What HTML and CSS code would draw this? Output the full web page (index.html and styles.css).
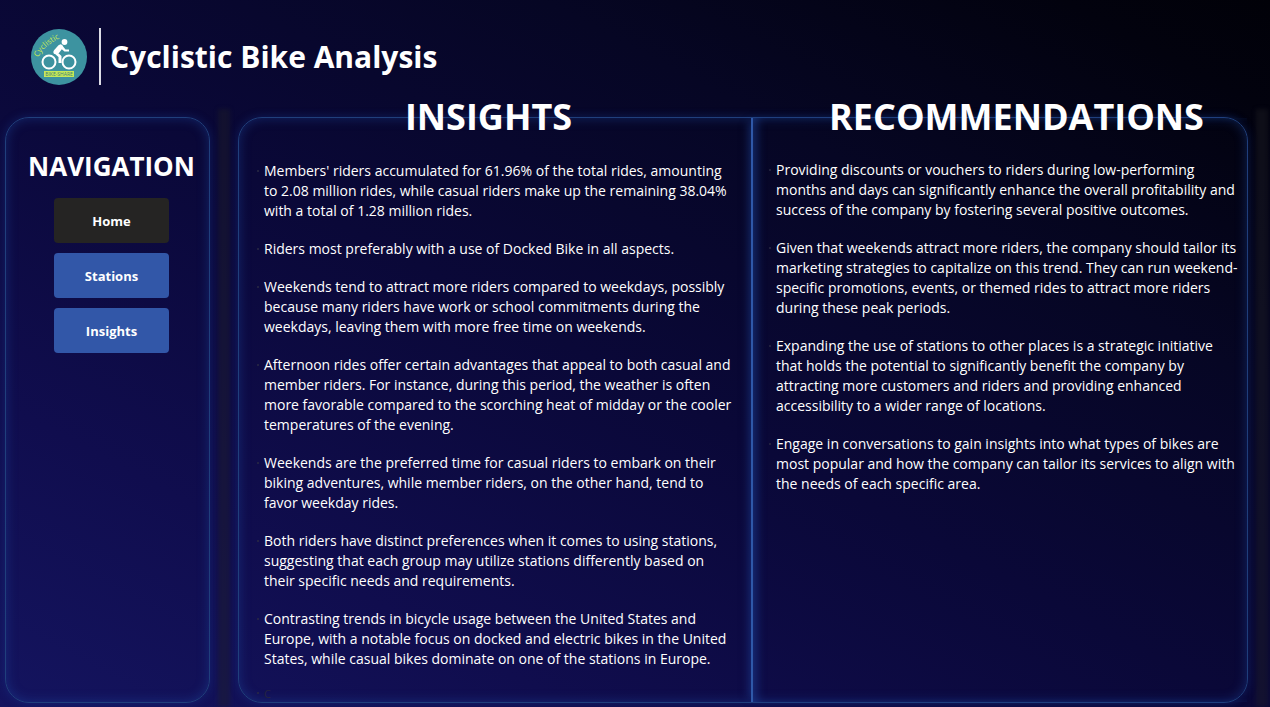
FILE: index.html
```html
<!DOCTYPE html>
<html lang="en">
<head>
<meta charset="utf-8">
<title>Cyclistic Bike Analysis</title>
<meta name="viewport" content="width=device-width, initial-scale=1">
<link rel="stylesheet" href="styles.css">
</head>
<body class="page">
<header class="header">
  <svg class="logo" viewBox="0 0 56 56" role="img" aria-label="Cyclistic Bike Share">
    <circle cx="28" cy="28" r="28" fill="#3d93a0"/>
    <path id="arc" d="M7 28.500Q14 15 34 7" fill="none"/>
    <text class="logo-name"><textPath href="#arc">Cyclistic</textPath></text>
    <g fill="none" stroke="#fff" stroke-width="2">
      <circle cx="18" cy="33" r="6.500"/>
      <circle cx="38" cy="33" r="6.500"/>
    </g>
    <circle cx="33.500" cy="13" r="2.900" fill="#fff"/>
    <path d="M30 17L24.500 23.500L29 27.500V34" fill="none" stroke="#fff" stroke-width="3" stroke-linejoin="round"/>
    <path d="M29.500 15.300Q31.500 15.500 32.500 18L34.500 20.500H38V22.500H33.500L30.800 20.200L28 24L23 25Q21.500 23 23 21.200L27.500 16.200Z" fill="#fff"/>
    <rect x="13" y="42" width="30" height="6" fill="#c6e858"/>
    <text class="logo-tag" x="28" y="47" text-anchor="middle">BIKE-SHARE</text>
  </svg>
  <h1 class="title">Cyclistic Bike Analysis</h1>
</header>
<main class="layout">
  <nav class="frame nav" aria-labelledby="nav-title">
    <h2 class="nav-title" id="nav-title">NAVIGATION</h2>
    <button class="nav-button nav-button-current" type="button">Home</button>
    <button class="nav-button" type="button">Stations</button>
    <button class="nav-button" type="button">Insights</button>
  </nav>
  <div class="strip"></div>
  <div class="frame board">
    <section class="column insights">
      <h2 class="column-title">INSIGHTS</h2>
      <ul class="points">
        <li>Members' riders accumulated for 61.96% of the total rides, amounting<br>to 2.08 million rides, while casual riders make up the remaining 38.04%<br>with a total of 1.28 million rides.</li>
        <li>Riders most preferably with a use of Docked Bike in all aspects.</li>
        <li>Weekends tend to attract more riders compared to weekdays, possibly<br>because many riders have work or school commitments during the<br>weekdays, leaving them with more free time on weekends.</li>
        <li>Afternoon rides offer certain advantages that appeal to both casual and<br>member riders. For instance, during this period, the weather is often<br>more favorable compared to the scorching heat of midday or the cooler<br>temperatures of the evening.</li>
        <li>Weekends are the preferred time for casual riders to embark on their<br>biking adventures, while member riders, on the other hand, tend to<br>favor weekday rides.</li>
        <li>Both riders have distinct preferences when it comes to using stations,<br>suggesting that each group may utilize stations differently based on<br>their specific needs and requirements.</li>
        <li>Contrasting trends in bicycle usage between the United States and<br>Europe, with a notable focus on docked and electric bikes in the United<br>States, while casual bikes dominate on one of the stations in Europe.</li>
        <li class="point-dim">C</li>
      </ul>
    </section>
    <section class="column recommendations">
      <h2 class="column-title">RECOMMENDATIONS</h2>
      <ul class="points">
        <li>Providing discounts or vouchers to riders during low-performing<br>months and days can significantly enhance the overall profitability and<br>success of the company by fostering several positive outcomes.</li>
        <li>Given that weekends attract more riders, the company should tailor its<br>marketing strategies to capitalize on this trend. They can run weekend-<br>specific promotions, events, or themed rides to attract more riders<br>during these peak periods.</li>
        <li>Expanding the use of stations to other places is a strategic initiative<br>that holds the potential to significantly benefit the company by<br>attracting more customers and riders and providing enhanced<br>accessibility to a wider range of locations.</li>
        <li>Engage in conversations to gain insights into what types of bikes are<br>most popular and how the company can tailor its services to align with<br>the needs of each specific area.</li>
      </ul>
    </section>
  </div>
  <div class="strip strip-end"></div>
</main>
</body>
</html>
```
FILE: styles.css
```css
* {
  box-sizing: border-box;
}

.page {
  margin: 0;
  min-height: 100vh;
  display: flex;
  flex-direction: column;
  color: #fff;
  font-family: "Segoe UI", "Open Sans", sans-serif;
  background: linear-gradient(28deg, #14145f 0%, #100d4e 22%, #0a0838 48%, #060624 72%, #02020e 92%, #010108 100%);
}

.header {
  display: flex;
  align-items: center;
  gap: 12px;
  padding: 28px 31px 22px;
}

.logo {
  width: 56px;
  height: 56px;
  flex: none;
}

.logo-name {
  font: 8px "Open Sans", sans-serif;
  fill: #c6e858;
}

.logo-tag {
  font: 5px "Open Sans", sans-serif;
  fill: #3d7f78;
}

.title {
  margin: 0;
  padding-left: 9px;
  border-left: 2px solid #dcdce6;
  font-size: 30px;
  font-weight: 700;
  line-height: 57px;
}

.layout {
  flex: 1;
  display: flex;
  padding: 10px 2px 4px 5px;
}

.frame {
  border: 1px solid #203f7c;
  border-radius: 24px;
  box-shadow: 0 0 10px rgba(24, 60, 150, 0.4), inset 0 0 12px rgba(32, 76, 165, 0.45);
}

.nav {
  flex: none;
  width: 205px;
  display: flex;
  flex-direction: column;
  align-items: center;
  gap: 10px;
  padding: 30px 12px 0 20px;
}

.nav-title {
  margin: 0 0 4px;
  font-size: 26px;
  font-weight: 700;
  line-height: 36px;
}

.nav-button {
  width: 115px;
  height: 45px;
  padding: 0;
  border: 0;
  border-radius: 4px;
  background: #3257a8;
  color: #fff;
  font: 700 13px/20px "Segoe UI", "Open Sans", sans-serif;
}

.nav-button-current {
  background: #252423;
}

.strip {
  flex: none;
  width: 12px;
  margin: -8px 8px -4px;
  background: rgba(32, 32, 38, 0.4);
  filter: blur(2px);
}

.strip-end {
  margin-right: 0;
}

.board {
  flex: 1;
  display: grid;
  grid-template-columns: 512fr 496fr;
}

.column {
  min-width: 0;
}

.insights {
  padding-left: 25px;
}

.recommendations {
  padding-left: 23px;
  border-left: 2px solid #2f58a8;
  box-shadow: -6px 0 8px -4px rgba(32, 76, 165, 0.5), inset 8px 0 10px -4px rgba(32, 76, 165, 0.5);
}

.column-title {
  margin: -27px 0 0;
  padding-left: 10px;
  font-size: 36px;
  font-weight: 700;
  line-height: 52px;
  text-align: center;
}

.insights .column-title {
  padding: 0 38px 0 0;
}

.points {
  display: flex;
  flex-direction: column;
  gap: 18px;
  margin: 0;
  padding: 17px 0 0;
  list-style: none;
  font-size: 14px;
  line-height: 20px;
  white-space: nowrap;
}

.insights .points {
  padding-top: 18px;
}

.points li::before {
  content: "";
  display: inline-block;
  width: 2px;
  height: 2px;
  margin: 0 5px 4px -7px;
  border-radius: 1px;
  background: #2a2a44;
}

.points .point-dim {
  font-size: 11px;
  line-height: 14px;
  color: #252440;
}
```
